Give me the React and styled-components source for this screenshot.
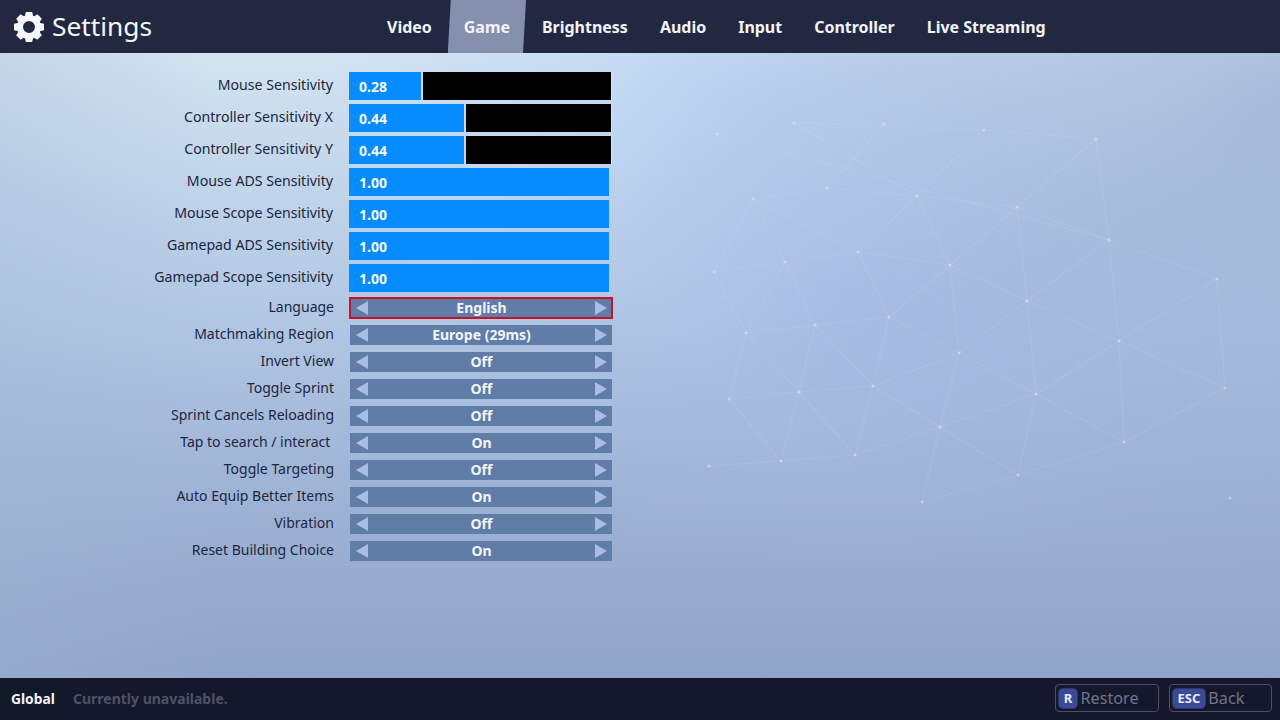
import React from 'react';
import styled, { createGlobalStyle } from 'styled-components';

const Global = createGlobalStyle`
  html, body { margin: 0; padding: 0; height: 100%; }
  body { font-family: "Noto Sans", "Open Sans", sans-serif; overflow: hidden; }
  #root { height: 100%; }
`;

const Page = styled.div`
  width: 1280px;
  height: 720px;
  display: flex;
  flex-direction: column;
  overflow: hidden;
`;

const Header = styled.header`
  height: 53px;
  flex: none;
  display: flex;
  align-items: stretch;
  background: #232841;
`;

const Brand = styled.div`
  width: 371px;
  flex: none;
  display: flex;
  align-items: center;
  gap: 7px;
  padding-left: 13px;
  box-sizing: border-box;
`;

const BrandTitle = styled.h1`
  margin: 0;
  font-size: 26.3px;
  font-weight: 400;
  line-height: 53px;
  color: #f4f6fa;
`;

const Nav = styled.nav`
  display: flex;
  align-items: stretch;
`;

const Tab = styled.div`
  display: flex;
  align-items: center;
  padding: 0 16px;
  font-size: 15.97px;
  font-weight: 700;
  color: #f2f4f8;
  background: ${p => (p.$active ? '#858fae' : 'transparent')};
  clip-path: ${p => (p.$active ? 'polygon(3px 0, 100% 0, calc(100% - 3px) 100%, 0 100%)' : 'none')};
`;

const Main = styled.main`
  flex: 1;
  position: relative;
  overflow: hidden;
  background:
    linear-gradient(90deg, rgba(160, 182, 212, 0.3) 0%, rgba(160, 182, 212, 0) 220px),
    radial-gradient(ellipse 720px 480px at 1320px 60px, rgba(140, 160, 205, 0.6), rgba(140, 160, 205, 0) 100%),
    radial-gradient(ellipse 420px 280px at 850px 250px, rgba(165, 185, 230, 0.5), rgba(165, 185, 230, 0) 100%),
    radial-gradient(ellipse 420px 260px at 720px 40px, rgba(190, 214, 246, 0.8), rgba(190, 214, 246, 0) 100%),
    linear-gradient(180deg, #d3e4f0 0%, #c0d4ea 22%, #b0c5e2 45%, #a0b4d6 68%, #91a4c9 100%);
`;

const Mesh = styled.svg`
  position: absolute;
  left: 0;
  top: 0;
  pointer-events: none;
`;

const Form = styled.div`
  position: relative;
  width: 612px;
  padding-top: 19px;
  display: flex;
  flex-direction: column;
`;

const SliderGroup = styled.div`
  display: flex;
  flex-direction: column;
  gap: 4px;
  margin-bottom: 6px;
`;

const SelectGroup = styled.div`
  display: flex;
  flex-direction: column;
  gap: 7px;
`;

const Row = styled.div`
  display: grid;
  grid-template-columns: ${p => (p.$select ? '334px 262px' : '333px 262px')};
  column-gap: 16px;
  align-items: center;
  height: ${p => (p.$select ? '20px' : '28px')};
`;

const Label = styled.label`
  text-align: right;
  white-space: pre;
  font-size: ${p => (p.$select ? '14px' : '14.15px')};
  line-height: 20px;
  color: #1c2640;
  position: relative;
  top: -1px;
`;

const Track = styled.div`
  height: 28px;
  display: flex;
  gap: 2px;
  width: 262px;
`;

const Fill = styled.div`
  box-sizing: border-box;
  height: 28px;
  padding: 2px 0 0 10px;
  background: #058dff;
  color: #f4f9ff;
  font-size: 14px;
  font-weight: 700;
  line-height: 26px;
  flex: none;
`;

const Rest = styled.div`
  flex: 1;
  height: 28px;
  background: #000;
  box-shadow: 1px 0 0 rgba(232, 240, 250, 0.55);
`;

const Select = styled.div`
  width: 262px;
  height: 20px;
  display: flex;
  align-items: center;
  justify-content: space-between;
  box-sizing: border-box;
  padding: 0 5px 0 6px;
  background: #5f7da7;
  outline: ${p => (p.$focused ? '2.5px solid #c8122c' : 'none')};
  outline-offset: -1.5px;
`;

const Value = styled.span`
  font-size: 14px;
  font-weight: 700;
  line-height: 20px;
  color: #f2f5fa;
  position: relative;
  top: -0.5px;
`;

const Arrow = styled.svg`
  width: 12px;
  height: 14px;
  flex: none;
  display: block;
`;

const Footer = styled.footer`
  height: 42px;
  flex: none;
  display: flex;
  align-items: stretch;
  background: #15182b;
  box-shadow: 0 -1px 0 #7f8cab;
`;

const Scope = styled.div`
  width: 62px;
  flex: none;
  box-sizing: border-box;
  padding: 0 0 2px 11px;
  display: flex;
  align-items: center;
  background: #121a2a;
  font-size: 13.8px;
  font-weight: 700;
  color: #f2f4f8;
`;

const Status = styled.div`
  flex: 1;
  display: flex;
  align-items: center;
  padding: 0 0 2px 11px;
  font-size: 14px;
  font-weight: 700;
  color: #4d5266;
`;

const Actions = styled.div`
  display: flex;
  align-items: center;
  gap: 10px;
  padding: 0 8px 2px 0;
`;

const ActionButton = styled.div`
  box-sizing: border-box;
  width: ${p => p.$w}px;
  height: 28px;
  display: flex;
  align-items: center;
  gap: 3.5px;
  padding-left: 3px;
  border: 1px solid #4b5068;
  border-radius: 4px;
  font-size: 16.2px;
  line-height: 26px;
  color: #6f7489;
`;

const Key = styled.span`
  height: 19px;
  min-width: 18px;
  padding: 0 4.5px;
  box-sizing: border-box;
  display: flex;
  align-items: center;
  justify-content: center;
  border-radius: 4px;
  background: #3b4a96;
  box-shadow: 0 0 0 1px #2b3566;
  font-size: 13px;
  font-weight: 700;
  color: #e6eaf6;
`;

const ArrowLeft = () => (
  <Arrow viewBox="0 0 12 14"><polygon points="0,7 12,0 12,14" fill="#a9bce2" /></Arrow>
);
const ArrowRight = () => (
  <Arrow viewBox="0 0 12 14"><polygon points="12,7 0,0 0,14" fill="#a9bce2" /></Arrow>
);

const Gear = () => (
  <svg width="32" height="32" viewBox="0 0 32 32" style={{ flex: 'none' }}>
    {[0, 45, 90, 135, 180, 225, 270, 315].map(a => (
      <polygon key={a} points="12.8,1 19.2,1 20.2,6 11.8,6" fill="#f6f7fa" transform={`rotate(${a} 16 16)`} />
    ))}
    <circle cx="16" cy="16" r="9" fill="none" stroke="#f6f7fa" strokeWidth="6" />
  </svg>
);

const nodes = [
  [794,70],[884,71],[984,77],[1096,86],[717,81],[827,135],[753,146],[917,143],[1017,154],[1109,187],
  [1217,226],[858,199],[785,209],[714,219],[950,212],[1027,248],[1119,288],[889,264],[815,272],[746,280],
  [959,300],[1225,335],[1036,341],[873,333],[799,339],[729,346],[940,374],[1124,389],[1018,422],[855,402],
  [781,408],[709,413],[922,449],[1230,445],
];
const edges = [
  [1,5],[5,6],[6,11],[5,7],[7,8],[8,3],[8,9],[9,10],[9,3],[7,11],[11,12],[12,6],[12,13],[6,13],[11,14],[7,14],
  [14,8],[14,15],[8,15],[15,9],[9,16],[15,16],[16,10],[10,21],[16,21],[11,17],[14,17],[17,18],[18,12],[18,19],[12,19],
  [13,19],[17,20],[14,20],[20,15],[15,22],[20,22],[22,16],[16,27],[22,27],[21,27],[18,23],[17,23],[20,23],[23,24],[24,18],
  [19,24],[19,25],[25,24],[23,26],[20,26],[26,22],[22,28],[26,28],[28,27],[26,29],[23,29],[29,24],[29,30],
  [30,24],[30,31],[25,30],[26,32],[28,32],[2,7],[4,9],[0,7],[1,0],[0,2],[2,3],
];

const sliders = [
  ['Mouse Sensitivity', '0.28', 72],
  ['Controller Sensitivity X', '0.44', 115],
  ['Controller Sensitivity Y', '0.44', 115],
  ['Mouse ADS Sensitivity', '1.00', 260],
  ['Mouse Scope Sensitivity', '1.00', 260],
  ['Gamepad ADS Sensitivity', '1.00', 260],
  ['Gamepad Scope Sensitivity', '1.00', 260],
];

const selects = [
  ['Language', 'English', true],
  ['Matchmaking Region', 'Europe (29ms)'],
  ['Invert View', 'Off'],
  ['Toggle Sprint', 'Off'],
  ['Sprint Cancels Reloading', 'Off'],
  ['Tap to search / interact ', 'On'],
  ['Toggle Targeting', 'Off'],
  ['Auto Equip Better Items', 'On'],
  ['Vibration', 'Off'],
  ['Reset Building Choice', 'On'],
];

const tabs = ['Video', 'Game', 'Brightness', 'Audio', 'Input', 'Controller', 'Live Streaming'];

export default function App() {
  return (
    <Page>
      <Global />
      <Header>
        <Brand>
          <Gear />
          <BrandTitle>Settings</BrandTitle>
        </Brand>
        <Nav>
          {tabs.map(t => <Tab key={t} $active={t === 'Game'}>{t}</Tab>)}
        </Nav>
      </Header>
      <Main>
        <Mesh width="1280" height="625" viewBox="0 0 1280 625">
          {edges.map(([a, b], i) => (
            <line key={i} x1={nodes[a][0]} y1={nodes[a][1]} x2={nodes[b][0]} y2={nodes[b][1]} stroke="#d5e1f5" strokeOpacity="0.16" strokeWidth="1.2" />
          ))}
          {nodes.map(([x, y], i) => <circle key={i} cx={x} cy={y} r="1.5" fill="#dbe6f6" fillOpacity="0.55" />)}
        </Mesh>
        <Form>
          <SliderGroup>
            {sliders.map(([label, value, width]) => (
              <Row key={label}>
                <Label>{label}</Label>
                <Track>
                  <Fill style={{ width }}>{value}</Fill>
                  {width < 260 && <Rest />}
                </Track>
              </Row>
            ))}
          </SliderGroup>
          <SelectGroup>
            {selects.map(([label, value, focused]) => (
              <Row key={label} $select>
                <Label $select>{label}</Label>
                <Select $focused={focused}>
                  <ArrowLeft />
                  <Value>{value}</Value>
                  <ArrowRight />
                </Select>
              </Row>
            ))}
          </SelectGroup>
        </Form>
      </Main>
      <Footer>
        <Scope>Global</Scope>
        <Status>Currently unavailable.</Status>
        <Actions>
          <ActionButton $w={104}><Key>R</Key>Restore</ActionButton>
          <ActionButton $w={103}><Key>ESC</Key>Back</ActionButton>
        </Actions>
      </Footer>
    </Page>
  );
}
